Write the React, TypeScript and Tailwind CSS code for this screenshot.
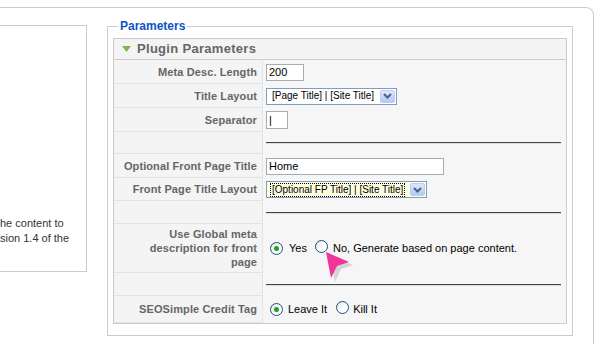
function Radio({ checked }: { checked?: boolean }) {
  return (
    <span className="inline-flex h-[13px] w-[13px] items-center justify-center rounded-full border border-[#1c5180] bg-gradient-to-br from-[#dcdcd7] via-white to-white">
      {checked && <span className="h-[5px] w-[5px] rounded-full bg-[#21a121]" />}
    </span>
  );
}

function Select({ text, width, focus }: { text: string; width: string; focus?: boolean }) {
  return (
    <div className={`flex h-[17px] items-center border border-[#7f9db9] ${focus ? "bg-[#ffffe1]" : "bg-white"} ${width}`}>
      <div className="flex-1 h-full flex items-center pl-[4px] overflow-hidden whitespace-nowrap text-[10px]">
        <span className={`px-[1px] leading-[12px] ${focus ? "outline outline-1 outline-dotted outline-black" : ""}`}>{text}</span>
      </div>
      <div className="m-[1px] flex h-[13px] w-[15px] shrink-0 items-center justify-center rounded-[2px] border border-[#b9cdf8] bg-gradient-to-b from-[#dde7fd] to-[#b3c8f5]">
        <svg width="9" height="6" viewBox="0 0 9 6">
          <path d="M1 1 L4.5 4.5 L8 1" stroke="#4d6185" strokeWidth="2" fill="none" />
        </svg>
      </div>
    </div>
  );
}

function Row({ label, h, children }: { label: React.ReactNode; h: string; children?: React.ReactNode }) {
  return (
    <div className={`flex ${h}`}>
      <div className="w-[149px] shrink-0 border-b border-r border-[#e3e3e3] bg-[#f4f4f4] pr-[5px] flex items-center justify-end text-right font-bold text-[#666] text-[11px] leading-[14px] tracking-[0.1px]">
        {label}
      </div>
      <div className="flex-1 flex items-center pl-[3px] pr-[5px] text-[11px] text-black">{children}</div>
    </div>
  );
}

function Rule() {
  return <div className="w-full h-[2px] border-t border-[#444] border-b-[#ddd] border-b" />;
}

export default function App() {
  return (
    <div className="w-[600px] h-[344px] overflow-hidden bg-white font-['Liberation_Sans',Arial,sans-serif]">
      <div className="mt-[7px] ml-[-10px] w-[604px] h-[400px] border-t border-r border-[#cccccc] rounded-tr-[8px] flex pt-[17px]">
        <div className="w-[97px] h-[247px] border border-l-0 border-[#cccccc] flex flex-col justify-end pb-[25px] text-[11px] text-[#333] leading-[15px]">
          <div className="pl-[10px] whitespace-nowrap">he content to</div>
          <div className="pl-[10px] whitespace-nowrap">sion 1.4 of the</div>
        </div>
        <fieldset className="ml-[20px] mt-[-6px] w-[466px] h-[317px] border border-[#cccccc] px-[5px] pt-[5px]">
          <legend className="ml-[5px] px-[2px] text-[12px] font-bold text-[#0b55c4] leading-[14px]">Parameters</legend>
          <div className="relative border border-[#cccccc] bg-[#f6f6f6]">
            <div className="h-[21px] border-b border-[#cccccc] bg-[#f4f4f4] flex items-center pl-[8px] gap-[6px]">
              <svg width="9" height="6" viewBox="0 0 9 6">
                <path d="M0 0 L9 0 L4.5 6 Z" fill="#80b846" />
              </svg>
              <span className="text-[13px] font-bold text-[#666] tracking-[0.3px]">Plugin Parameters</span>
            </div>
            <Row label="Meta Desc. Length" h="h-[24px]">
              <div className="w-[38px] h-[17px] border border-[#a5acb2] bg-white flex items-center pl-[2px]">200</div>
            </Row>
            <Row label="Title Layout" h="h-[24px]">
              <Select text="[Page Title] | [Site Title]" width="w-[131px]" />
            </Row>
            <Row label="Separator" h="h-[24px]">
              <div className="w-[22px] h-[18px] border border-[#a5acb2] bg-white flex items-center pl-[2px]">|</div>
            </Row>
            <Row label="" h="h-[22px]">
              <Rule />
            </Row>
            <Row label="Optional Front Page Title" h="h-[24px]">
              <div className="w-[178px] h-[17px] border border-[#a5acb2] bg-white flex items-center pl-[2px]">Home</div>
            </Row>
            <Row label="Front Page Title Layout" h="h-[23px]">
              <Select text="[Optional FP Title] | [Site Title]" width="w-[161px]" focus />
            </Row>
            <Row label="" h="h-[23px]">
              <Rule />
            </Row>
            <Row label={<span>Use Global meta<br />description for front<br />page</span>} h="h-[49px]">
              <div className="flex items-center pl-[4px]">
                <Radio checked />
                <span className="ml-[6px]">Yes</span>
                <span className="ml-[8px]"><Radio /></span>
                <span className="ml-[5px]">No, Generate based on page content.</span>
              </div>
            </Row>
            <Row label="" h="h-[23px]">
              <Rule />
            </Row>
            <Row label="SEOSimple Credit Tag" h="h-[27px]">
              <div className="flex items-center pl-[4px]">
                <Radio checked />
                <span className="ml-[5px]">Leave It</span>
                <span className="ml-[9px]"><Radio /></span>
                <span className="ml-[4px]">Kill It</span>
              </div>
            </Row>
            <svg className="absolute left-[211px] top-[212px]" width="30" height="32" viewBox="0 0 30 32">
              <path d="M2 2 L26 12 L14 16 L8 29 Z" fill="#999" opacity="0.35" transform="translate(2,2)" />
              <path d="M1 1 L24 11 L12 15 L6 27 Z" fill="#f0349a" />
            </svg>
          </div>
        </fieldset>
      </div>
    </div>
  );
}
